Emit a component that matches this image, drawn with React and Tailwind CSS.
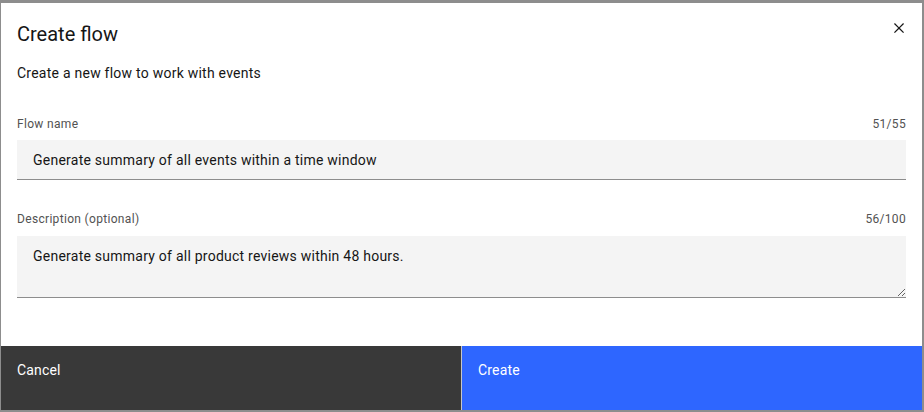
import React from 'react';

const font = { fontFamily: 'Roboto, "Liberation Sans", sans-serif' };

const Field = ({ label, count, children }) => (
  <div>
    <div className="flex items-center justify-between h-4 mt-px text-xs text-[#525252] tracking-[0.32px]">
      <span>{label}</span>
      <span>{count}</span>
    </div>
    {children}
  </div>
);

export default function App() {
  return (
    <div className="h-screen bg-[#8d8d8d] pt-[3px] pl-[1px] pr-[2px] pb-[2px]" style={font}>
      <div className="h-full bg-white flex flex-col relative">
        <button className="absolute right-[13px] top-[15px] w-5 h-5 flex items-center justify-center text-[#161616]" aria-label="Close">
          <svg width="20" height="20" viewBox="0 0 32 32" fill="currentColor">
            <path d="M24 9.4L22.6 8 16 14.6 9.4 8 8 9.4 14.6 16 8 22.6 9.4 24 16 17.4 22.6 24 24 22.6 17.4 16 24 9.4z" />
          </svg>
        </button>

        <div className="px-4 pt-[17px]">
          <h2 className="text-xl leading-7 text-[#161616]">Create flow</h2>
          <p className="mt-[16px] text-sm leading-[18px] text-[#161616] tracking-[0.24px]">Create a new flow to work with events</p>
        </div>

        <div className="px-4 mt-[33px] flex flex-col gap-[30px]">
          <Field label="Flow name" count="51/55">
            <input
              className="mt-[8px] block w-full h-10 bg-[#f4f4f4] border-b border-[#8d8d8d] px-4 text-sm text-[#161616] tracking-[0.24px] outline-none"
              defaultValue="Generate summary of all events within a time window"
              style={font}
            />
          </Field>
          <Field label="Description (optional)" count="56/100">
            <textarea
              className="mt-[9px] block w-full h-[62px] bg-[#f4f4f4] border-b border-[#8d8d8d] px-4 pt-[10px] text-sm leading-5 text-[#161616] tracking-[0.24px] outline-none resize-y"
              defaultValue="Generate summary of all product reviews within 48 hours."
              style={font}
            />
          </Field>
        </div>

        <div className="mt-auto flex h-16">
          <button className="flex-1 bg-[#393939] text-white text-sm tracking-[0.16px] text-left px-4 pt-[14px] self-stretch flex items-start">Cancel</button>
          <div className="w-px bg-[#c6c6c6]" />
          <button className="flex-1 bg-[#2e66ff] text-white text-sm tracking-[0.16px] text-left px-4 pt-[14px] self-stretch flex items-start">Create</button>
        </div>
      </div>
    </div>
  );
}
